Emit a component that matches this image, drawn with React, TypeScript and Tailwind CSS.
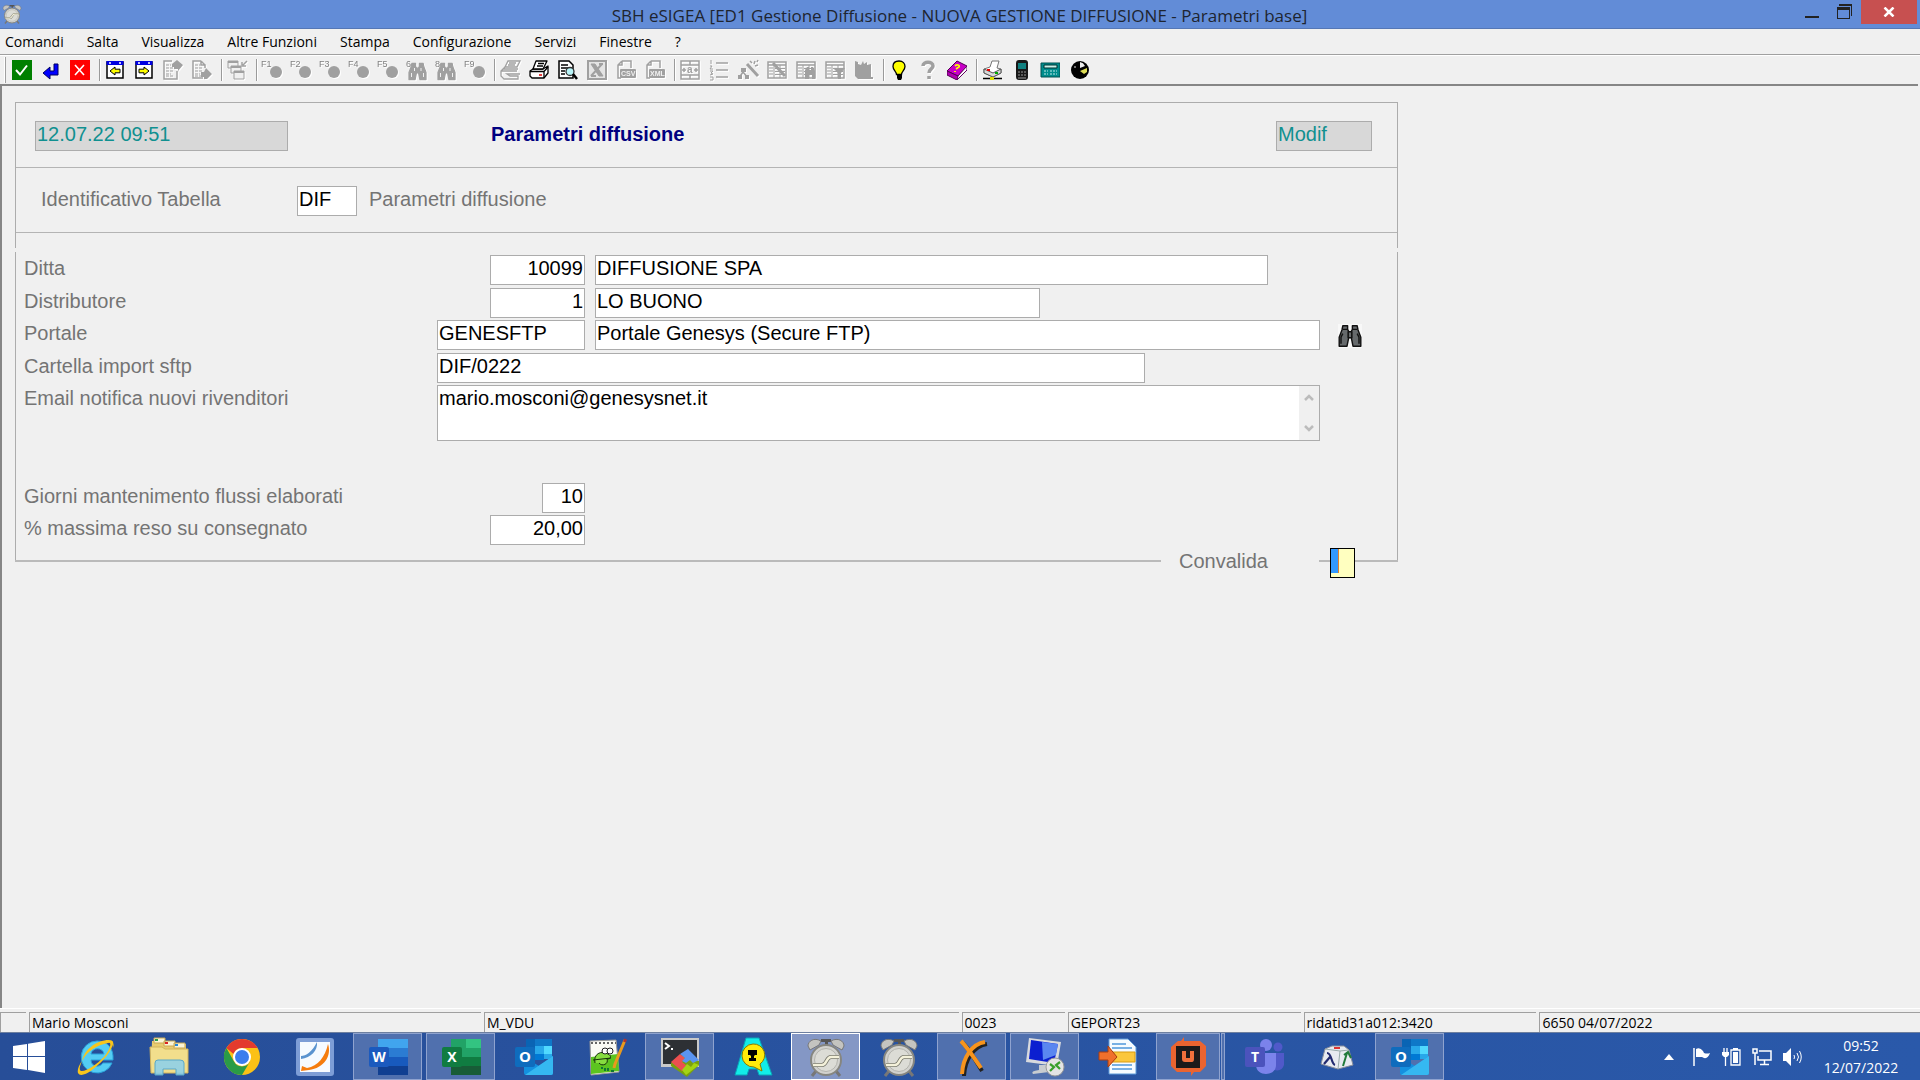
import type { ReactNode } from "react";

const menus = ["Comandi", "Salta", "Visualizza", "Altre Funzioni", "Stampa", "Configurazione", "Servizi", "Finestre", "?"];

const G = "#a0a0a0";

function Ico({ children, off }: { children: ReactNode; off?: boolean }) {
  return (
    <svg viewBox="0 0 20 20" className={off ? "size-5 overflow-visible drop-shadow-[1px_1px_0_#ffffff]" : "size-5"} aria-hidden="true">
      {children}
    </svg>
  );
}

function FKey({ label }: { label: string }) {
  return (
    <Ico off>
      <text x="-1" y="7" fontSize="9" fontFamily="Liberation Sans, sans-serif" fill="#808080">{label}</text>
      <circle cx="14" cy="12" r="6" fill={G} />
    </Ico>
  );
}

function BinocularsShape({ fill, stroke }: { fill: string; stroke: string }) {
  return (
    <g fill={fill} stroke={stroke} strokeWidth="1.2" strokeLinejoin="round">
      <path d="M4 1.5h4v3l.8 1.5V12l-1.3 6.5H1V11L3.3 5z" />
      <path d="M16 1.5h-4v3L11.2 6V12l1.3 6.5H19V11L16.7 5z" />
      <path d="M8.5 6.500h3v5h-3zM4 4.500h4M12 4.500h4M2.500 16.500V11l1.500-3M17.500 16.500V11L16 8" />
    </g>
  );
}

function FindKey({ label }: { label: string }) {
  return (
    <Ico off>
      <g transform="translate(1 2) scale(.95)"><BinocularsShape fill={G} stroke={G} /></g>
      <path d="M4.500 13v4M7.500 8v3M14 8v3M16.500 13v4" stroke="#f0f0f0" />
      <text x="-1" y="7" fontSize="9" fontFamily="Liberation Sans, sans-serif" fill="#808080">{label}</text>
    </Ico>
  );
}

function WindowArrow({ flip }: { flip?: boolean }) {
  return (
    <Ico>
      <rect x="2" y="2" width="16" height="16" fill="#fff" stroke="#000" strokeWidth="1.500" />
      <rect x="1.500" y="1" width="17" height="4" fill="#0000e0" />
      <path d="M4 3h2M14 3h2" stroke="#fff" strokeWidth="1.500" />
      <path d={flip ? "M15 11l-5-4v2.200H5v3.600h5V15z" : "M5 11l5-4v2.200h5v3.600h-5V15z"} fill="#ff0" stroke="#000" />
    </Ico>
  );
}

function DocMove({ down }: { down?: boolean }) {
  return (
    <Ico off>
      <path d={down ? "M9 1H1v17h10M9 1l4 4M9 1v4h4v3" : "M9 1H1v18h13v-8"} fill="none" stroke={G} strokeWidth="1.500" />
      <path d="M3 5h5M3 8h7M3 11h7M3 14h5M3 16h7" stroke={G} strokeDasharray="3 1" />
      <path d={down ? "M14 8l6 6-5 5H12v-2H9v-5h3z" : "M14 0l6 5-5 6v-2h-4V7H9V4z"} fill={G} />
    </Ico>
  );
}

function FileExport({ label }: { label: string }) {
  return (
    <Ico off>
      <path d="M6 1h9v7M6 1L2 5v13h3M6 1v4H2" fill="none" stroke={G} strokeWidth="1.500" />
      <rect x="4" y="9" width="16" height="9" rx="1" fill={G} />
      <text x="5" y="16" fontSize="7" fontWeight="bold" fontFamily="Liberation Sans, sans-serif" fill="#f0f0f0">{label}</text>
    </Ico>
  );
}

function GridShape({ children }: { children?: ReactNode }) {
  return (
    <Ico off>
      <path d="M1 2h18v16H1zM1 5h18" fill="none" stroke={G} strokeWidth="1.500" />
      <path d="M2 8h4M2 11h4M2 14h4M7 5v13M13 5v13M8 8.500h10M8 11.500h10M8 14.500h10" stroke={G} />
      {children}
    </Ico>
  );
}

function PrinterShape({ color, fill }: { color: string; fill: string }) {
  return (
    <g fill={fill} stroke={color} strokeWidth="1.300" strokeLinejoin="round">
      <path d="M4 9h10l5-3v7l-4 5H3l-2-2v-5z" />
      <path d="M7 1h11l-4 8H4z" />
      <path d="M9 3.500h6M8 6h6M1 11.500h14V18M15 11.500L19 7" fill="none" />
    </g>
  );
}

type Tool = { name: string; icon: ReactNode };

const toolGroups: Tool[][] = [
  [
    { name: "Conferma", icon: <Ico><rect width="20" height="20" fill="#008000" /><path d="M4 10l4 4.500 7-9" stroke="#fff" strokeWidth="2" fill="none" /></Ico> },
    { name: "Invio", icon: <Ico><path d="M13 4h4v11H9v4l-7-6 7-6v4h4z" fill="#0000ff" stroke="#000060" /></Ico> },
    { name: "Annulla", icon: <Ico><rect width="20" height="20" fill="#f00" /><path d="M5 5l9 10M14 5L5 15" stroke="#fff" strokeWidth="1.600" /></Ico> },
  ],
  [
    { name: "Finestra precedente", icon: <WindowArrow /> },
    { name: "Finestra successiva", icon: <WindowArrow flip /> },
    { name: "Pagina su", icon: <DocMove /> },
    { name: "Pagina giù", icon: <DocMove down /> },
  ],
  [
    {
      name: "Sovrapponi",
      icon: (
        <Ico off>
          <path d="M1 1h10v7H1z" fill="#f0f0f0" stroke={G} /><path d="M1 2h10" stroke={G} strokeWidth="2" />
          <path d="M4 6h10v7H4z" fill="#f0f0f0" stroke={G} /><path d="M4 7h10" stroke={G} strokeWidth="2" />
          <path d="M7 11h10v8H7z" fill="#f0f0f0" stroke={G} /><path d="M7 12h10" stroke={G} strokeWidth="2" />
          <path d="M20 1l-4 4M15 2v4h4" stroke={G} strokeWidth="1.500" fill="none" />
        </Ico>
      ),
    },
  ],
  [
    { name: "F1", icon: <FKey label="F1" /> },
    { name: "F2", icon: <FKey label="F2" /> },
    { name: "F3", icon: <FKey label="F3" /> },
    { name: "F4", icon: <FKey label="F4" /> },
    { name: "F5", icon: <FKey label="F5" /> },
    { name: "Cerca 6", icon: <FindKey label="6" /> },
    { name: "Cerca 8", icon: <FindKey label="8" /> },
    { name: "F9", icon: <FKey label="F9" /> },
  ],
  [
    {
      name: "Stampa elenco",
      icon: <Ico off><path d="M8 1h12l-3 6H5zM9 3h7M8 5h7M5 7l-4 4v5l3 3h14v-3h-8l-3-2h13M1 11h16M3 9h15" fill="none" stroke={G} strokeWidth="1.300" /></Ico>,
    },
    { name: "Stampa", icon: <Ico><PrinterShape color="#000" fill="#fff" /><path d="M10 15h3" stroke="#e00000" strokeWidth="1.500" /></Ico> },
    {
      name: "Anteprima",
      icon: <Ico><path d="M1 1h10l4 4v13H1z" fill="#fff" stroke="#000" strokeWidth="1.500" /><path d="M3 5h7M3 8h7M3 11h4M3 14h4" stroke="#000" strokeWidth="1.300" /><circle cx="12" cy="11.500" r="4" fill="#b8f4f8" stroke="#333" strokeWidth="1.300" /><path d="M15 14l4 5" stroke="#000" strokeWidth="2.500" /></Ico>,
    },
    {
      name: "Esporta Excel",
      icon: <Ico off><rect x="1" y="1" width="18" height="18" fill="#e4e4e4" stroke={G} strokeWidth="2" /><path d="M4 4h4l8 12h-4z" fill={G} stroke={G} /><path d="M15 4L4 16M4 16h5M12 4h4" stroke={G} strokeWidth="2" /></Ico>,
    },
    { name: "Esporta CSV", icon: <FileExport label="CSV" /> },
    { name: "Esporta XML", icon: <FileExport label="XML" /> },
  ],
  [
    {
      name: "Larghezza colonne",
      icon: <Ico off><path d="M1 1h18v18H1zM1 5h18M1 15h18M10 1v4M10 15v4M2 10h4M14 10h4M4 8v4M16 8v4" fill="none" stroke={G} strokeWidth="1.500" /><text x="7" y="13" fontSize="10" fontWeight="bold" fill={G} fontFamily="Liberation Sans, sans-serif">a</text></Ico>,
    },
    { name: "Numerazione", icon: <Ico off><path d="M7 3h12M7 10h12M7 17h12" stroke={G} strokeWidth="1.500" /><path d="M2 0v4M1 6h2l-2 3h3M1 11h3l-2 2 2 1-3 1M1 17h3v3H1" fill="none" stroke={G} /></Ico> },
    { name: "Autocomposizione", icon: <Ico off><path d="M9 4l11 12" stroke={G} strokeWidth="3" /><path d="M5 8v4M5 12l-4 6M5 12l5 6M12 1l2 2M17 1l-1 3M20 5l-3 1M20 0l-1 2" stroke={G} strokeWidth="1.500" /><path d="M3 8h5v4H3zM0 15h4v4H0zM7 15h4v4H7z" fill={G} /></Ico> },
    { name: "Modifica griglia", icon: <GridShape><path d="M6 3l12 13" stroke={G} strokeWidth="3" /></GridShape> },
    { name: "Cerca in griglia", icon: <GridShape><path d="M9 10l2-3h2v3h2V7h2l2 4v8h-3v-4h-3v4H9z" fill={G} /></GridShape> },
    { name: "Filtra griglia", icon: <GridShape><path d="M8 8h12l-4 5v6h-3v-6z" fill={G} /></GridShape> },
    { name: "Grafico", icon: <Ico off><path d="M1 1v15l3 3h15v-2h-2V4l-4 1V2l-3 2-1-3-2 4-3-1V2z" fill={G} /></Ico> },
  ],
  [
    { name: "Suggerimento", icon: <Ico><path d="M10 1c-4 0-6 2.500-6 5.500 0 3.500 3.500 5 3.500 8h5c0-3 3.500-4.500 3.500-8C16 3.500 14 1 10 1z" fill="#ff0" stroke="#000" strokeWidth="1.300" /><path d="M8 15h5v3l-1 2H9l-1-2z" fill="#000" /></Ico> },
    { name: "Aiuto", icon: <Ico off><path d="M5 6c0-5 10-5 10 0 0 3-4 3-4 7M11 16v3" fill="none" stroke={G} strokeWidth="3.500" /></Ico> },
    { name: "Manuale", icon: <Ico><path d="M0 11L10 1l10 5-9 10z" fill="#c800c8" stroke="#500050" /><path d="M0 11v4l10 5 1-4z" fill="#b000b0" stroke="#500050" /><path d="M11 16l9-10v4L10 20z" fill="#fff" stroke="#600060" /><path d="M8 6c2-2 5-1 4 1l-3 2M8 11v1" stroke="#ff0" strokeWidth="1.800" fill="none" /></Ico> },
  ],
  [
    {
      name: "Stampante locale",
      icon: <Ico><path d="M10 1h7l-2 7 4 1v4l-8 4-9-4V9l6-2z" fill="#fff" stroke="#777" /><path d="M2 9l9 4 8-4v4l-8 4-9-4z" fill="#d8d8d8" stroke="#555" /><path d="M5 10h3" stroke="#e00" strokeWidth="2" /><path d="M1 18.500h19" stroke="#000" strokeWidth="1.500" /><path d="M8 17h4v3H8z" fill="#dd0" /><path d="M13 13h3" stroke="#0a0" strokeWidth="2" /></Ico>,
    },
    { name: "Telefono", icon: <Ico><rect x="5" y="0" width="12" height="20" rx="3" fill="#181818" /><path d="M7 3h8v6H7z" fill="#108080" /><path d="M7 12h2M10 12h2M13 12h2M7 15h2M10 15h2M13 15h2M7 18h8" stroke="#999" /></Ico> },
    { name: "Calcolatrice", icon: <Ico><path d="M1 3h19v14H1z" fill="#008c8c" stroke="#005050" /><path d="M4 5h13v3H4z" fill="#c8f0e8" stroke="#003030" /><path d="M4 11h4M4 14h4M10 11h7M10 14h7" stroke="#c0e8e8" strokeDasharray="2 1" /></Ico> },
    { name: "Orologio", icon: <Ico><circle cx="11" cy="10" r="9" fill="#000" /><path d="M11 8V2a7 7 0 0 1 5 4z" fill="#eee" /><path d="M11 11l7-3v4l-3 2z" fill="#dd5" /><circle cx="6" cy="7" r="1" fill="#999" /></Ico> },
  ],
];

function AlarmClock({ className }: { className: string }) {
  return (
    <svg viewBox="0 0 40 40" className={className} aria-hidden="true">
      <path d="M10 34l-4 5M30 34l4 5" stroke="#777" strokeWidth="3" />
      <path d="M19 4h3v5h-3zM15 2h10v3H15z" fill="#555" />
      <path d="M2 9C2 4 8 0 15 4l-2 4-9 5zM38 9c0-5-6-9-13-5l2 4 9 5z" fill="#c4c4c0" stroke="#777" />
      <circle cx="20" cy="23" r="15" fill="#d2d2ce" stroke="#868680" strokeWidth="2" />
      <circle cx="20" cy="23" r="11.500" fill="#dcdcd6" stroke="#b4b4ae" />
      <path d="M7 28h9c5 0 4-8 9-8h8" stroke="#77776c" strokeWidth="4" fill="none" />
      <path d="M7 28h9c5 0 4-8 9-8h8" stroke="#f4f1da" strokeWidth="2.500" fill="none" />
    </svg>
  );
}

function Svg({ children }: { children: ReactNode }) {
  return <svg viewBox="0 0 40 40" className="size-10" aria-hidden="true">{children}</svg>;
}

const letter = { fontFamily: "Open Sans, sans-serif", fontWeight: 700, fill: "#fff", textAnchor: "middle" as const };

const outlook = (
  <Svg>
    <path d="M12 2h26v20H12z" fill="#0a64b4" />
    <path d="M21 2h17v7H21z" fill="#0f78c8" />
    <path d="M21 9h9v8h-9z" fill="#28a8ea" /><path d="M30 9h8v8h-8z" fill="#50d9ff" />
    <path d="M21 17h9v6h-9z" fill="#0078d4" /><path d="M30 17h8v5h-8z" fill="#28a8ea" />
    <path d="M10 20l15 9 14-10v17a2 2 0 0 1-2 2H12a2 2 0 0 1-2-2z" fill="#1490df" />
    <path d="M39 19L11 38h26a2 2 0 0 0 2-2z" fill="#35b8f1" />
    <rect x="1" y="10" width="20" height="20" rx="2" fill="#0f6cbd" />
    <text x="11" y="25" fontSize="15" {...letter}>O</text>
  </Svg>
);

type Task = { name: string; state?: "open" | "active" | "stacked"; icon: ReactNode };

const tasks: Task[] = [
  {
    name: "Internet Explorer",
    icon: (
      <Svg>
        <path d="M21 4a16 16 0 1 0 15 22h-9c-3 5-12 4-12-3h22C38 11 31 4 21 4zm-6 13c1-7 12-7 13 0z" fill="#54cdf4" stroke="#2aa2da" />
        <path d="M32 5c8-5 6 6-4 17S5 42 2 36c-1-3 1-8 4-12-3 7-3 10 0 10 5 0 15-7 22-14C33 14 37 5 32 5z" fill="#f8c51c" />
        <path d="M6 24C8 13 20 3 33 3q6 0 4 8 0-6-5-5C21 8 11 14 6 24z" fill="#f8c51c" />
      </Svg>
    ),
  },
  {
    name: "Esplora file",
    icon: (
      <Svg>
        <path d="M3 4h12l2 3h20v28H2z" fill="#e8cc70" />
        <path d="M5 1h11v5H5zM15 4h11v5H15zM25 6h11v5H25z" fill="#fbf4d6" stroke="#c9a850" />
        <path d="M6 3h3" stroke="#2a9d4a" strokeWidth="2" /><path d="M16 6h3" stroke="#d22" strokeWidth="2" /><path d="M26 8h3" stroke="#28d" strokeWidth="2" />
        <path d="M1 10h12l3 2h23v24H2z" fill="#f2de8c" stroke="#d2b45c" />
        <path d="M6 38V26q0-3 3-3h22q4 0 4 3v12h-8v-6H14v6z" fill="#8fd0e8" fillOpacity=".9" stroke="#5aa8c8" />
      </Svg>
    ),
  },
  {
    name: "Chrome",
    icon: (
      <Svg>
        <circle cx="20" cy="20" r="18" fill="#fbc116" />
        <path d="M4.400 11a18 18 0 0 0 15.600 27l8-13.500a9 9 0 0 1-16 0z" fill="#2a9b47" />
        <path d="M4.400 11A18 18 0 0 1 35.600 11H20a9 9 0 0 0-8.500 6z" fill="#e33b2e" />
        <circle cx="20" cy="20" r="9" fill="#fff" /><circle cx="20" cy="20" r="7" fill="#3b7ded" />
      </Svg>
    ),
  },
  {
    name: "Foxit Reader",
    icon: (
      <Svg>
        <rect x="1" y="1" width="38" height="38" rx="3" fill="#7d9dd6" />
        <rect x="5" y="5" width="30" height="30" fill="#f6faff" />
        <path d="M6 19C11 19 17 15 22 5c1 8-6 16-16 17z" fill="#5b93cf" />
        <path d="M6 34l1-5 5 2C23 29 30 20 33 7c4 12-4 24-19 26z" fill="#f57c0e" />
      </Svg>
    ),
  },
  {
    name: "Word",
    state: "open",
    icon: (
      <Svg>
        <path d="M10 2h30v9H10z" fill="#41a5ee" /><path d="M10 11h30v9H10z" fill="#2b7cd3" />
        <path d="M10 20h30v9H10z" fill="#185abd" /><path d="M10 29h30v9H10z" fill="#103f91" />
        <rect x="1" y="10" width="20" height="20" rx="2" fill="#1b5abe" />
        <text x="11" y="25" fontSize="14" {...letter}>W</text>
      </Svg>
    ),
  },
  {
    name: "Excel",
    state: "open",
    icon: (
      <Svg>
        <path d="M10 2h15v9H10zM10 11h15v9H10z" fill="#21a366" /><path d="M25 2h15v9H25z" fill="#33c481" />
        <path d="M10 20h15v9H10z" fill="#107c41" /><path d="M25 11h15v9H25z" fill="#21a366" />
        <path d="M25 20h15v9H25z" fill="#107c41" /><path d="M10 29h30v9H10z" fill="#185c37" />
        <rect x="1" y="10" width="20" height="20" rx="2" fill="#107c41" />
        <text x="11" y="25" fontSize="14" {...letter}>X</text>
      </Svg>
    ),
  },
  { name: "Outlook", icon: outlook },
  {
    name: "Notepad++",
    icon: (
      <Svg>
        <path d="M3 4l26-1 3 32-28 3z" fill="#fafaf4" stroke="#999" />
        <path d="M4 20l27-3 1 17-28 3z" fill="#5cc420" />
        <path d="M4 6h25" stroke="#666" strokeDasharray="2 2" strokeWidth="2" />
        <path d="M8 26c-2-9 6-13 13-9 4 2 3 5-1 5 2 5-5 8-8 4M6 23l18-2" fill="#86dc40" stroke="#152e0a" />
        <circle cx="18" cy="14" r="3" fill="#fff" stroke="#222" /><circle cx="23" cy="14" r="3" fill="#fff" stroke="#222" />
        <path d="M14 31h2M18 31v3M21 31v3M24 34h3" stroke="#173" strokeWidth="2" />
        <path d="M38 3L28 27l-1 4" stroke="#e89a1e" strokeWidth="3" /><path d="M38.500 2l-1 3" stroke="#a33" strokeWidth="3" />
      </Svg>
    ),
  },
  {
    name: "MobaXterm",
    state: "open",
    icon: (
      <Svg>
        <path d="M1 1h38v29H1z" fill="#c9c9c9" /><path d="M3 3h34v24H3z" fill="#2d3034" />
        <path d="M5 6l4 3-4 3M11 12h2" stroke="#fff" strokeWidth="2" fill="none" />
        <path d="M11 26l9-8 19 6v4L27 40 11 29z" fill="#7aa010" />
        <path d="M11 25l9-8 5 4-3 4 5 4-5 5z" fill="#ec5050" /><path d="M20 17l8-5 11 11-6 3-3-3-4 3-4-2 3-3z" fill="#5a94f0" /><path d="M22 33l5-6 4 3 3-4 5 2-13 10z" fill="#a4d414" />
      </Svg>
    ),
  },
  {
    name: "Accesso remoto",
    icon: (
      <Svg>
        <path d="M13 1h13l13 37H26l-2-6h-8l-2 6H2z" fill="#12ece8" stroke="#08a5b8" />
        <path d="M20 7a11 11 0 0 1 7 20l2 7-8-4A11 11 0 1 1 20 7z" fill="#ffeb0a" stroke="#8a7800" />
        <path d="M15 13h9v5h-2l-1 1v2h2v3h-7v-3h2v-2l-1-1h-2z" fill="#000" />
      </Svg>
    ),
  },
  { name: "eSIGEA", state: "active", icon: <AlarmClock className="size-10" /> },
  { name: "eSIGEA 2", icon: <AlarmClock className="size-10" /> },
  {
    name: "X server",
    state: "open",
    icon: (
      <Svg>
        <path d="M11 6c6 6 12 16 19 28M35 7C22 9 13 22 12 39" stroke="#222" strokeWidth="4" fill="none" />
        <path d="M9 4c6 6 14 18 20 27M33 5C20 7 11 20 10 37" stroke="#f7941d" strokeWidth="4" fill="none" />
      </Svg>
    ),
  },
  {
    name: "Desktop remoto",
    state: "open",
    icon: (
      <Svg>
        <path d="M14 28h8l2 7-16 2q-3-3 6-4z" fill="#c8ccd0" />
        <path d="M4 1l32 4-4 24-31-4z" fill="#d8dade" /><path d="M6 3l27 4-4 19L4 22z" fill="#0b1fd0" /><path d="M17 5l16 2-2 11-13 5z" fill="#5a86f0" />
        <circle cx="30" cy="30" r="9" fill="#e4e4e4" stroke="#999" />
        <path d="M25 27l4 3-4 4M35 25l-4 3 4 4" stroke="#39a02c" strokeWidth="2.200" fill="none" />
      </Svg>
    ),
  },
  {
    name: "Importa documenti",
    icon: (
      <Svg>
        <path d="M11 2h19l8 8v27H11z" fill="#f6fbff" stroke="#5e9ad8" /><path d="M14 7h14M14 11h20M14 28h20M14 32h20" stroke="#78b0e4" strokeWidth="2" />
        <path d="M11 15h26v10H11z" fill="#fbc73c" stroke="#d99c10" />
        <path d="M1 15h9v-6l9 11-9 10v-7H1z" fill="#f0702c" stroke="#a83c10" />
      </Svg>
    ),
  },
  {
    name: "UltraEdit",
    state: "stacked",
    icon: (
      <Svg>
        <path d="M10 4h3l3-4v4h16l6 5v20l-6 6h-6l-3 4v-4H9l-6-6V10z" fill="#ea6430" />
        <path d="M8 9h24v22H8z" fill="#1c1a1a" />
        <path d="M14 14v8q0 3 3 3h7q2 0 2-3v-8h-4v7h-4v-7z" fill="#f0703c" />
      </Svg>
    ),
  },
  {
    name: "Teams",
    icon: (
      <Svg>
        <circle cx="22" cy="8" r="6" fill="#7b83eb" /><circle cx="34" cy="10" r="4.500" fill="#5059c9" />
        <path d="M28 16h12v12q-2 7-10 5z" fill="#5059c9" /><path d="M12 16h20v12c0 12-20 12-20 0z" fill="#7b83eb" />
        <rect x="1" y="10" width="20" height="20" rx="2" fill="#4b53bc" />
        <text x="11" y="25" fontSize="14" {...letter}>T</text>
      </Svg>
    ),
  },
  {
    name: "Lambda",
    icon: (
      <Svg>
        <path d="M8 12l7-3h12l5 4 4 15-15 4-17-5z" fill="#e8eaf0" stroke="#8a8f9c" />
        <path d="M21 32l2-18M8 12l15 2 9-1" stroke="#9aa" fill="none" /><path d="M17 11h6" stroke="#d33" strokeWidth="2" />
        <path d="M10 16c5 0 4 11 8 12M13 20l-6 7" stroke="#222a70" strokeWidth="2.200" fill="none" />
        <path d="M26 29l4-13M27 18l4-3 3 6" stroke="#217a3a" strokeWidth="2" fill="none" />
      </Svg>
    ),
  },
  { name: "Outlook calendario", state: "open", icon: outlook },
];

const taskStyles = {
  idle: "border-transparent",
  open: "border-[#8fa3cf] bg-[#5070ae]",
  active: "border-white bg-[#8497c5]",
};

const status = [
  { text: "", width: "w-[26px]" },
  { text: "Mario Mosconi", width: "flex-[453]" },
  { text: "M_VDU", width: "flex-[476]" },
  { text: "0023", width: "flex-[101]" },
  { text: "GEPORT23", width: "flex-[232]" },
  { text: "ridatid31a012:3420", width: "flex-[232]" },
  { text: "6650 04/07/2022", width: "flex-[381]" },
];

const field = "h-[30px] border border-[#acacac] bg-white px-px pb-[3px] text-xl leading-[22px] text-black outline-none";
const locked = "h-[30px] border border-[#acacac] bg-[#d8d8d8] px-px pb-[3px] text-xl leading-[22px] text-[#109090] outline-none";

function Row({ id, label, children }: { id: string; label: string; children: ReactNode }) {
  return (
    <div className="flex items-start">
      <label htmlFor={id} className="w-[413px] shrink-0 pt-0.5 leading-[22px]">{label}</label>
      {children}
    </div>
  );
}

function TitleBar() {
  return (
    <header className="flex h-[29px] items-start border-b border-[#5577b5] bg-[#628cd7] text-[#1e2530]">
      <div className="flex flex-1 pt-1 pl-0.5">
        <AlarmClock className="size-5" />
      </div>
      <h1 className="text-[17px] leading-8">SBH eSIGEA [ED1 Gestione Diffusione - NUOVA GESTIONE DIFFUSIONE - Parametri base]</h1>
      <div className="flex flex-1 justify-end pr-[3px]">
        <button aria-label="Riduci a icona" className="flex h-6 w-8 justify-center pt-4">
          <span className="h-0.5 w-3.5 bg-[#222]" />
        </button>
        <button aria-label="Ripristina" className="mr-px flex h-6 w-8 justify-center pt-1">
          <svg viewBox="0 0 15 15" className="size-[15px]" shapeRendering="crispEdges" aria-hidden="true">
            <path d="M2 0h13v12h-1V2H2zM0 3h13v12H0zm1 3v8h11V6z" fill="#222" fillRule="evenodd" />
          </svg>
        </button>
        <button aria-label="Chiudi" className="flex h-6 w-14 items-center justify-center bg-[#c75050]">
          <svg viewBox="0 0 12 10" className="h-2.5 w-3" aria-hidden="true">
            <path d="M1.500.500l9 9M10.500.500l-9 9" stroke="#fff" strokeWidth="2.500" />
          </svg>
        </button>
      </div>
    </header>
  );
}

function Toolbar() {
  return (
    <div className="flex h-[29px] items-center border-t border-white pl-1" role="toolbar">
      <span className="mr-1.5 h-[26px] w-0.5 border-r border-[#a0a0a0] bg-white" />
      {toolGroups.map((group, i) => (
        <div key={i} className="flex items-center">
          {i > 0 && <span className="mr-1 h-[22px] w-0.5 border-l border-[#9a9a9a] bg-white" />}
          {group.map((tool) => (
            <button key={tool.name} aria-label={tool.name} className="w-[29px]">{tool.icon}</button>
          ))}
        </div>
      ))}
    </div>
  );
}

function ParametersForm() {
  return (
    <form className="w-full max-w-[1383px] text-xl text-[#747474]">
      <div className="border border-b-0 border-[#acacac]">
        <div className="flex h-[65px] items-start border-b border-[#b4b4b4] pt-[18px] pr-[25px] pl-[19px]">
          <input aria-label="Data e ora" readOnly defaultValue="12.07.22 09:51" className={`${locked} w-[253px]`} />
          <h2 className="ml-[203px] pt-0.5 leading-[22px] font-bold text-[#000080]">Parametri diffusione</h2>
          <input aria-label="Modalità" readOnly defaultValue="Modif" className={`${locked} ml-auto w-24`} />
        </div>
        <div className="flex h-[65px] items-start border-b border-[#b4b4b4] pt-[18px] pl-[25px]">
          <label htmlFor="tabella" className="w-[256px] pt-0.5 leading-[22px]">Identificativo Tabella</label>
          <input id="tabella" defaultValue="DIF" className={`${field} w-[60px]`} />
          <span className="ml-3 pt-0.5 leading-[22px]">Parametri diffusione</span>
        </div>
        <div className="h-[15px]" />
      </div>

      <div className="mt-1 flex flex-col gap-0.5 border-x border-[#acacac] pt-[3px] pr-[77px] pb-[17px] pl-2">
        <Row id="ditta" label="Ditta">
          <div className="mr-2.5 mb-px flex w-[148px] shrink-0 justify-end">
            <input id="ditta" defaultValue="10099" className={`${field} w-[95px] text-right`} />
          </div>
          <input aria-label="Descrizione ditta" defaultValue="DIFFUSIONE SPA" className={`${field} w-[673px]`} />
        </Row>
        <Row id="distributore" label="Distributore">
          <div className="mr-2.5 flex w-[148px] shrink-0 justify-end">
            <input id="distributore" defaultValue="1" className={`${field} w-[95px] text-right`} />
          </div>
          <input aria-label="Descrizione distributore" defaultValue="LO BUONO" className={`${field} w-[445px]`} />
        </Row>
        <Row id="portale" label="Portale">
          <input id="portale" defaultValue="GENESFTP" className={`${field} mr-2.5 mb-px w-[148px]`} />
          <input aria-label="Descrizione portale" defaultValue="Portale Genesys (Secure FTP)" className={`${field} min-w-0 flex-1`} />
          <button type="button" aria-label="Cerca portale" className="-mr-[42px] ml-[18px] pt-1">
            <svg viewBox="0 0 20 20" className="size-6" aria-hidden="true">
              <path d="M0 0h20v20H0z" fill="#fff" fillOpacity=".5" />
              <BinocularsShape fill="#666a6c" stroke="#111" />
            </svg>
          </button>
        </Row>
        <Row id="cartella" label="Cartella import sftp">
          <input id="cartella" defaultValue="DIF/0222" className={`${field} w-[708px]`} />
        </Row>
        <Row id="email" label="Email notifica nuovi rivenditori">
          <div className="flex h-14 flex-1 border border-[#acacac] bg-white">
            <textarea id="email" defaultValue="mario.mosconi@genesysnet.it" className="flex-1 resize-none overflow-hidden px-px leading-6 text-black outline-none" />
            <div className="flex w-5 flex-col items-center justify-between bg-[#f0f0f0] py-2">
              <svg viewBox="0 0 10 7" className="h-[7px] w-2.5" aria-hidden="true"><path d="M1 6l4-4 4 4" stroke="#bcbcbc" strokeWidth="2.500" fill="none" /></svg>
              <svg viewBox="0 0 10 7" className="h-[7px] w-2.5" aria-hidden="true"><path d="M1 1l4 4 4-4" stroke="#bcbcbc" strokeWidth="2.500" fill="none" /></svg>
            </div>
          </div>
        </Row>
        <div className="mt-10">
          <Row id="giorni" label="Giorni mantenimento flussi elaborati">
            <div className="flex w-[148px] justify-end">
              <input id="giorni" defaultValue="10" className={`${field} w-[43px] text-right`} />
            </div>
          </Row>
        </div>
        <Row id="reso" label="% massima reso su consegnato">
          <div className="flex w-[148px] justify-end">
            <input id="reso" defaultValue="20,00" className={`${field} w-[95px] text-right`} />
          </div>
        </Row>
      </div>

      <div className="-mt-3.5 flex items-start">
        <span className="mt-3 h-0.5 flex-1 bg-[#bababa]" />
        <label htmlFor="convalida" className="w-[158px] pl-[18px] leading-[26px]">Convalida</label>
        <span className="mt-3 h-0.5 w-[11px] bg-[#bababa]" />
        <button id="convalida" type="button" className="flex h-[30px] w-[25px] border border-black bg-[#ffffc0] pb-1">
          <span className="h-full w-2 border-r border-[#e08030] bg-[#3399ff]" />
        </button>
        <span className="mt-3 h-0.5 w-[43px] bg-[#bababa]" />
      </div>
    </form>
  );
}

function TaskButton({ task }: { task: Task }) {
  if (task.state === "stacked") {
    return (
      <button aria-label={task.name} className="flex h-[47px] w-[69px]">
        <span className="flex h-full w-16 items-center justify-center border border-[#8fa3cf] bg-[#5070ae]">{task.icon}</span>
        <span className="ml-px h-full w-1 border border-[#8fa3cf] bg-[#5070ae]" />
      </button>
    );
  }
  return (
    <button aria-label={task.name} className={`flex h-[47px] w-[69px] items-center justify-center border ${taskStyles[task.state ?? "idle"]}`}>
      {task.icon}
    </button>
  );
}

function TrayIcon({ name, children }: { name: string; children: ReactNode }) {
  return (
    <button aria-label={name}>
      <svg viewBox="0 0 20 20" className="size-5" aria-hidden="true">{children}</svg>
    </button>
  );
}

function Taskbar() {
  return (
    <footer className="flex h-12 items-center border-t border-[#6d7f9f] bg-linear-to-r from-[#274e98] to-[#2a59aa] text-white">
      <button aria-label="Start" className="w-[61px] pl-3">
        <svg viewBox="0 0 34 34" className="size-[34px]" aria-hidden="true">
          <path d="M1 6l14-2v12H1zM16 3.800L33 1v15H16zM1 17h14v13L1 28zM16 17h17v16l-17-3z" fill="#fff" />
        </svg>
      </button>
      <div className="flex gap-1">
        {tasks.map((task) => <TaskButton key={task.name} task={task} />)}
      </div>
      <div className="ml-auto flex items-center gap-2.5">
        <button aria-label="Mostra icone nascoste" className="mr-2">
          <svg viewBox="0 0 10 6" className="h-1.5 w-2.5" aria-hidden="true"><path d="M0 6l5-6 5 6z" fill="#fff" /></svg>
        </button>
        <TrayIcon name="Centro operativo">
          <path d="M2 1v18" stroke="#fff" strokeWidth="1.500" /><path d="M4 2q4-2 7 2l1 2q3 1 6 0-2 6-6 5l-2-1H4z" fill="#fff" />
        </TrayIcon>
        <TrayIcon name="Batteria">
          <path d="M9 3h9v15H9z" fill="none" stroke="#fff" strokeWidth="1.300" /><path d="M11 5h5v11h-5zM11 1h5v2h-5z" fill="#fff" /><path d="M2 1v4M5 1v4M3.500 9v10" stroke="#fff" strokeWidth="1.300" /><path d="M0 5h7v3l-2 2H2L0 8z" fill="#fff" />
        </TrayIcon>
        <TrayIcon name="Rete">
          <path d="M7 4h12v9H6V9M12.500 13v4M8 17.500h9" fill="none" stroke="#fff" strokeWidth="1.500" /><path d="M1 2h4v4H1zM3 6v12" fill="none" stroke="#fff" strokeWidth="1.500" />
        </TrayIcon>
        <TrayIcon name="Volume">
          <path d="M1 6h3l5-5v18l-5-5H1z" fill="#fff" /><path d="M12 8q1 2 0 4M15 6q3 4 0 8M17.500 4q3.500 6 0 12" stroke="#fff" fill="none" />
        </TrayIcon>
      </div>
      <time className="w-[118px] text-center text-sm leading-[22px]">
        <span className="block">09:52</span>
        <span className="block">12/07/2022</span>
      </time>
    </footer>
  );
}

export default function App() {
  return (
    <div className="flex min-h-screen flex-col bg-[#f0f0f0] font-['Open_Sans',sans-serif] text-black">
      <TitleBar />
      <nav className="flex h-[26px] items-center gap-[23px] border-b border-[#a0a0a0] pl-[5px] text-sm">
        {menus.map((m) => (
          <button key={m}>{m}</button>
        ))}
      </nav>
      <Toolbar />
      <main className="mr-0.5 flex-1 border-t-2 border-l-2 border-[#868686] pt-4 pl-[13px] font-['Liberation_Sans',Arial,sans-serif]">
        <ParametersForm />
      </main>
      <div className="flex h-6 items-end gap-[3px] border-t border-white text-sm">
        {status.map((cell, i) => (
          <div key={i} className={`h-5 truncate border-t border-l border-[#a0a0a0] pl-0.5 leading-[19px] ${cell.width}`}>{cell.text}</div>
        ))}
      </div>
      <Taskbar />
    </div>
  );
}
